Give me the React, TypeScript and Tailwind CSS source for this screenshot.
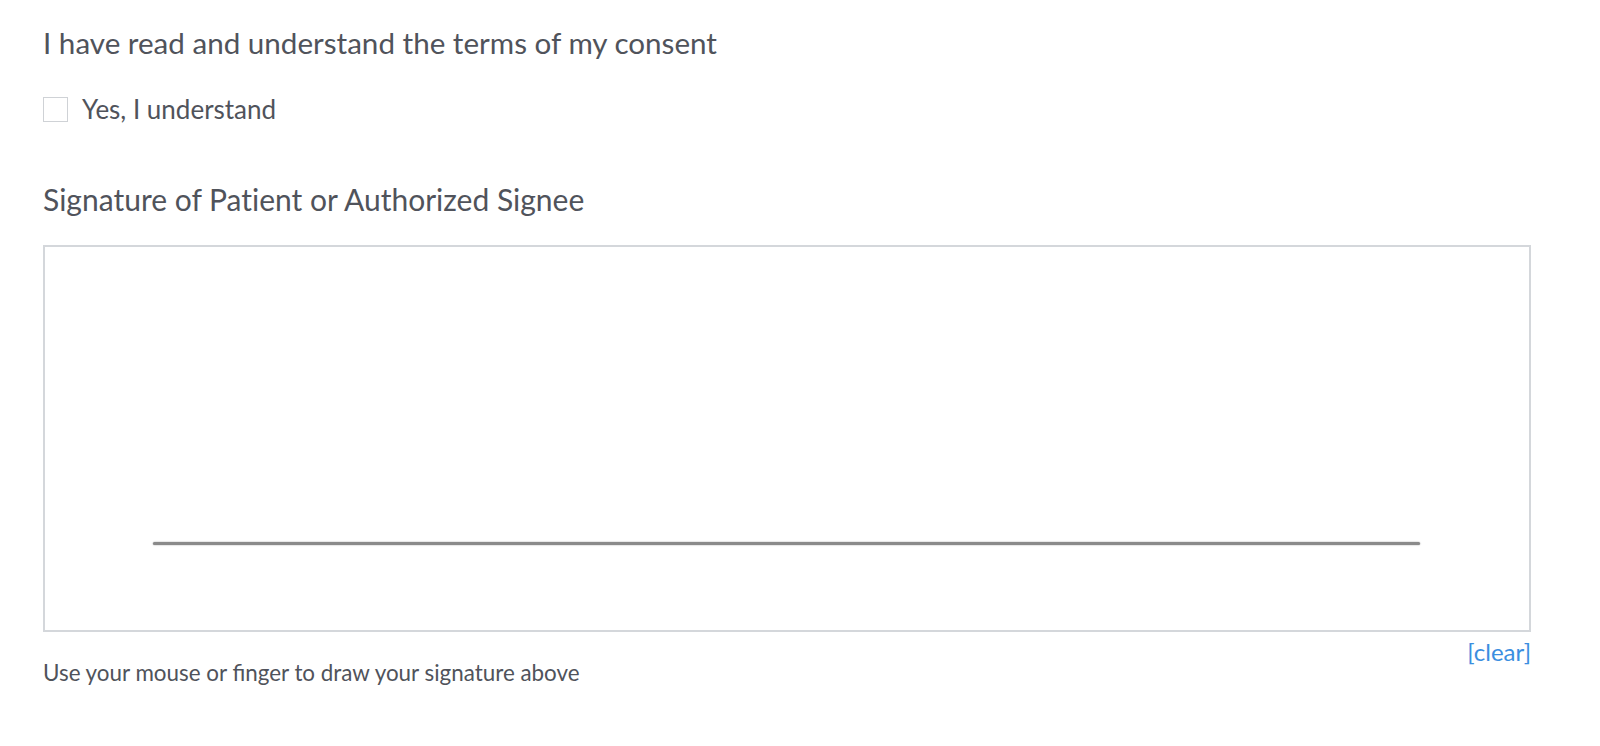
export default function App() {
  return (
    <div className="min-h-[746px] bg-white font-['Lato',sans-serif] text-[#50535b]">
      <div className="w-[1488px] pl-[43px] pt-[25px] box-content">
        <p className="text-[29.6px] leading-[36px]">I have read and understand the terms of my consent</p>

        <label className="mt-[33px] flex items-center gap-[14px]">
          <span className="h-[25px] w-[25px] shrink-0 border border-[#cfd2d6] bg-white" />
          <span className="text-[26px] leading-[31px]">Yes, I understand</span>
        </label>

        <h2 className="mt-[56px] text-[30px] leading-[36px] [font-feature-settings:'liga'_0]">
          Signature of Patient or Authorized Signee
        </h2>

        <div className="mt-[28px] flex h-[387px] flex-col border-2 border-[#d4d7db] bg-white">
          <div className="flex-1" />
          <div className="ml-[108px] mr-[109px] mb-[85px] h-[3px] rounded-full bg-[#8a8a8a] shadow-[0_0_1.5px_#8a8a8a]" />
        </div>

        <div className="mt-[5px] flex justify-end">
          <button className="text-[24px] leading-[29px] text-[#3b8ee0]">[clear]</button>
        </div>
        <p className="-mt-[7px] text-[22.4px] leading-[27px]">Use your mouse or finger to draw your signature above</p>
      </div>
    </div>
  );
}
